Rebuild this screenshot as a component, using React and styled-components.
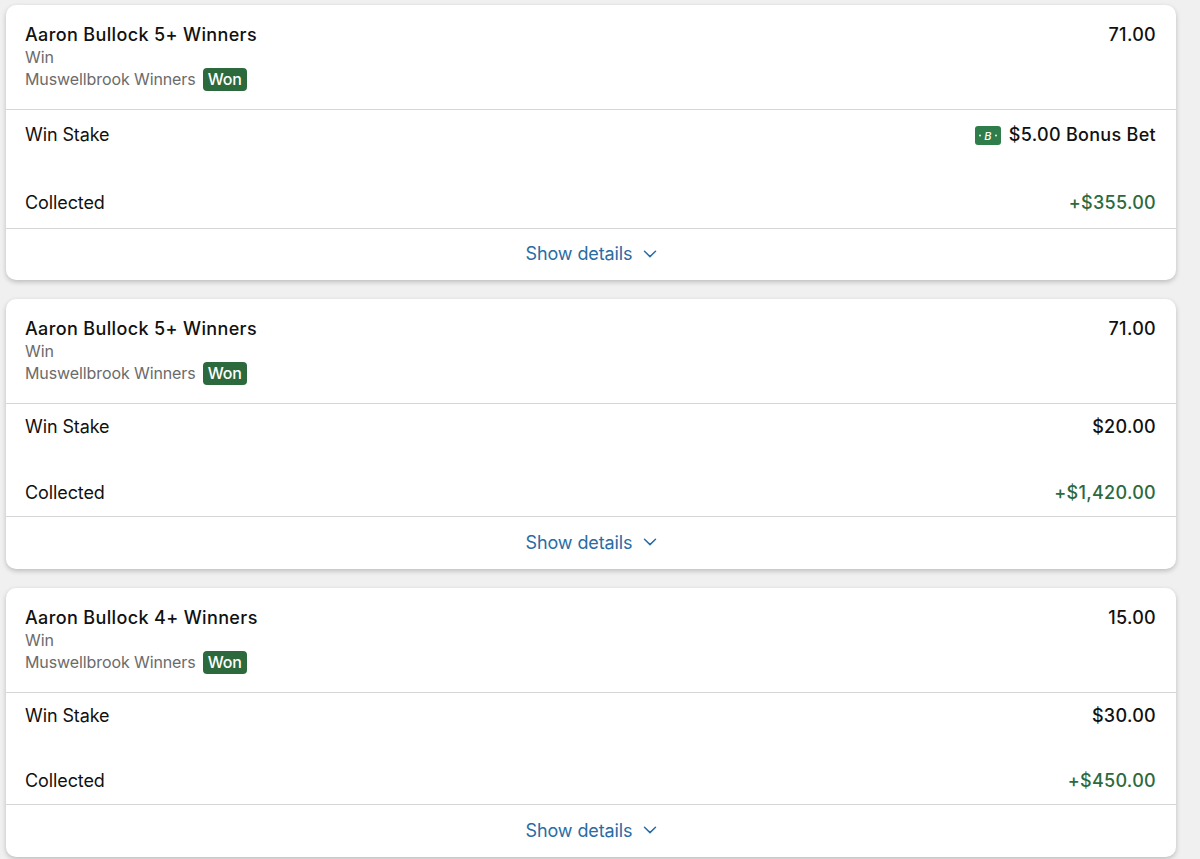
import React from "react";
import styled, { createGlobalStyle } from "styled-components";

const Global = createGlobalStyle`
  html, body { margin: 0; padding: 0; background: #f0f0f0; }
  body { font-family: Inter, "Liberation Sans", sans-serif; height: 859px; overflow: hidden; }
`;

const Page = styled.div`
  display: flex;
  flex-direction: column;
  gap: 19px;
  padding: 5px 24px 0 6px;
`;

const Card = styled.section`
  background: #fff;
  border-radius: 10px;
  box-shadow: 0 2px 5px rgba(0, 0, 0, 0.22);
`;

const Header = styled.header`
  display: flex;
  justify-content: space-between;
  align-items: flex-start;
  height: 105px;
  box-sizing: border-box;
  padding: 18px 20px 0 19px;
  border-bottom: 1px solid #d6d6d6;
`;

const Info = styled.div`
  display: flex;
  flex-direction: column;
`;

const Title = styled.div`
  font-size: 18px;
  font-weight: 500;
  line-height: 24px;
  letter-spacing: 0.36px;
  color: #111;
`;

const Sub = styled.div`
  display: flex;
  align-items: center;
  gap: 7px;
  font-size: 16px;
  line-height: 21px;
  letter-spacing: -0.1px;
  color: #6b6b6b;
`;

const Badge = styled.span`
  display: inline-block;
  background: #2c6a3e;
  color: #fff;
  border-radius: 4px;
  padding: 0 5px;
  font-size: 16px;
  font-weight: 500;
  line-height: 23px;
  letter-spacing: -0.1px;
`;

const Odds = styled.div`
  font-size: 18px;
  font-weight: 500;
  line-height: 24px;
  letter-spacing: 0.3px;
  color: #111;
`;

const Body = styled.div`
  display: flex;
  flex-direction: column;
  justify-content: space-between;
  box-sizing: border-box;
  height: ${(p) => p.$h}px;
  padding: ${(p) => p.$pad}px 20px ${(p) => p.$pad}px 19px;
  border-bottom: 1px solid #d6d6d6;
`;

const Row = styled.div`
  display: flex;
  justify-content: space-between;
  align-items: center;
  line-height: 24px;
`;

const Label = styled.span`
  font-size: 18px;
  letter-spacing: -0.1px;
  color: #111;
`;

const Value = styled.span`
  display: flex;
  align-items: center;
  gap: 8px;
  font-size: 18px;
  font-weight: 500;
  letter-spacing: 0.3px;
  color: ${(p) => (p.$won ? "#2c6a3e" : "#111")};
`;

const BonusIcon = styled.svg`
  display: block;
  width: 26px;
  height: 19px;
`;

const Footer = styled.button`
  display: flex;
  align-items: center;
  justify-content: center;
  gap: 10px;
  width: 100%;
  height: ${(p) => p.$h}px;
  background: none;
  border: 0;
  padding: 0 0 2px;
  font: 400 18px Inter, "Liberation Sans", sans-serif;
  letter-spacing: -0.1px;
  color: #2a6ca3;
`;

const Chevron = styled.svg`
  display: block;
  width: 14px;
  height: 8px;
`;

const bets = [
  { title: "Aaron Bullock 5+ Winners", odds: "71.00", stake: "$5.00", bonus: true, collected: "+$355.00", bodyH: 119, pad: 13, footH: 51 },
  { title: "Aaron Bullock 5+ Winners", odds: "71.00", stake: "$20.00", collected: "+$1,420.00", bodyH: 113, pad: 11, footH: 52 },
  { title: "Aaron Bullock 4+ Winners", odds: "15.00", stake: "$30.00", collected: "+$450.00", bodyH: 112, pad: 11, footH: 52 },
];

export default function App() {
  return (
    <>
      <Global />
      <Page>
        {bets.map((b, i) => (
          <Card key={i}>
            <Header>
              <Info>
                <Title>{b.title}</Title>
                <Sub>Win</Sub>
                <Sub>
                  Muswellbrook Winners <Badge>Won</Badge>
                </Sub>
              </Info>
              <Odds>{b.odds}</Odds>
            </Header>
            <Body $h={b.bodyH} $pad={b.pad}>
              <Row>
                <Label>Win Stake</Label>
                <Value>
                  {b.bonus && (
                    <BonusIcon viewBox="0 0 26 19" aria-hidden="true">
                      <rect width="26" height="19" rx="3" fill="#2f7d4a" />
                      <circle cx="5" cy="9.5" r="0.9" fill="#fff" />
                      <circle cx="21" cy="9.5" r="0.9" fill="#fff" />
                      <text x="13" y="13.5" textAnchor="middle" fontSize="11" fontStyle="italic" fontWeight="500" fill="#fff" fontFamily="Inter, sans-serif">B</text>
                    </BonusIcon>
                  )}
                  {b.stake}{b.bonus && " Bonus Bet"}
                </Value>
              </Row>
              <Row>
                <Label>Collected</Label>
                <Value $won>{b.collected}</Value>
              </Row>
            </Body>
            <Footer $h={b.footH}>
              Show details
              <Chevron viewBox="0 0 14 8" fill="none" stroke="#2a6ca3" strokeWidth="1.5" strokeLinecap="round" strokeLinejoin="round">
                <path d="M1.5 1.2 7 6.6l5.5-5.4" />
              </Chevron>
            </Footer>
          </Card>
        ))}
      </Page>
    </>
  );
}
